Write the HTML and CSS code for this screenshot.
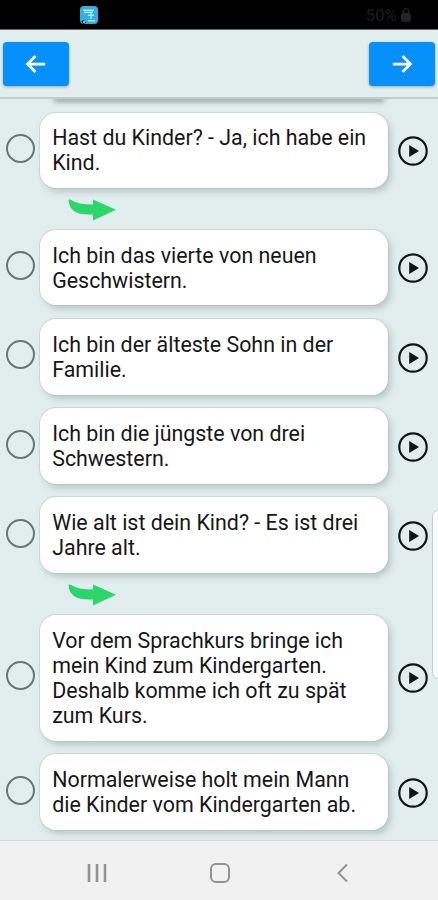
FILE: index.html
```
<!DOCTYPE html>
<html lang="de">
<head>
<meta charset="utf-8">
<title>Sätze</title>
<link rel="stylesheet" href="styles.css">
</head>
<body>
<svg class="defs" aria-hidden="true">
  <symbol id="play" viewBox="0 0 32 32"><circle cx="16" cy="16" r="13.7" fill="none" stroke="#101616" stroke-width="2.2"/><path d="M12.2 10v12L22 16z" fill="#101616"/></symbol>
  <symbol id="swoosh" viewBox="0 0 48 22"><path d="M1 .6Q2 .1 3.2 1Q10 5.6 25 5.6V.6L48 10.8L25 21.4V15.4Q2 17 .6 2Q.5 1 1 .6Z" fill="#2bd66b"/></symbol>
</svg>
<div class="status">
  <svg class="app-icon" viewBox="0 0 20 20"><rect x="1" y="1" width="18" height="18" rx="4" fill="#35aee2"/><path d="M4 5.2h11M5 7.2h9M9 10.3h6M12 7v7M9 15.8h7" stroke="#a9e4f8" stroke-width="1.5" fill="none"/><path d="M2 16l3-1 2 3-3 1z" fill="#20364a"/><circle cx="5" cy="17" r="1" fill="#e8b9b5"/></svg>
  <span class="battery">50%</span>
  <svg class="battery-icon" viewBox="0 0 12 16"><path d="M3.5 6V4a2.5 2.5 0 0 1 5 0v2" fill="none" stroke="#1c1c1c" stroke-width="1.5"/><rect x="1" y="6" width="10" height="9" rx="3" fill="#242424"/></svg>
</div>
<header class="toolbar">
  <button class="nav-btn"><svg viewBox="0 0 24 24"><path d="M22 12H3M11.5 3.2L2.8 12l8.7 8.8"/></svg></button>
  <button class="nav-btn"><svg viewBox="0 0 24 24"><path d="M2 12h19M12.5 3.2L21.2 12l-8.7 8.8"/></svg></button>
</header>
<main class="list">
  <div class="previous"></div>
  <div class="row"><i class="radio"></i><p class="card">Hast du Kinder? - Ja, ich habe ein<br>Kind.</p><svg class="play"><use href="#play"/></svg></div>
  <div class="divider"><svg class="swoosh"><use href="#swoosh"/></svg></div>
  <div class="row"><i class="radio"></i><p class="card">Ich bin das vierte von neuen<br>Geschwistern.</p><svg class="play"><use href="#play"/></svg></div>
  <div class="row"><i class="radio"></i><p class="card">Ich bin der älteste Sohn in der<br>Familie.</p><svg class="play"><use href="#play"/></svg></div>
  <div class="row"><i class="radio"></i><p class="card">Ich bin die jüngste von drei<br>Schwestern.</p><svg class="play"><use href="#play"/></svg></div>
  <div class="row"><i class="radio"></i><p class="card">Wie alt ist dein Kind? - Es ist drei<br>Jahre alt.</p><svg class="play"><use href="#play"/></svg></div>
  <div class="divider"><svg class="swoosh"><use href="#swoosh"/></svg></div>
  <div class="row"><i class="radio"></i><p class="card">Vor dem Sprachkurs bringe ich<br>mein Kind zum Kindergarten.<br>Deshalb komme ich oft zu spät<br>zum Kurs.</p><svg class="play"><use href="#play"/></svg></div>
  <div class="row"><i class="radio"></i><p class="card">Normalerweise holt mein Mann<br>die Kinder vom Kindergarten ab.</p><svg class="play"><use href="#play"/></svg></div>
</main>
<nav class="system">
  <svg viewBox="0 0 24 24"><path d="M4 3v18M12 3v18M20 3v18" stroke-width="2.6"/></svg>
  <svg viewBox="0 0 24 24"><rect x="3" y="3" width="18" height="18" rx="5"/></svg>
  <svg viewBox="0 0 24 24"><path d="M17 3.5L8.5 12l8.5 8.5"/></svg>
</nav>
<div class="edge-handle"></div>
</body>
</html>
```
FILE: styles.css
```
* { box-sizing: border-box; }
body {
  margin: 0;
  width: 438px;
  height: 900px;
  overflow: hidden;
  position: relative;
  display: flex;
  flex-direction: column;
  background: #e2eeee;
  font-family: Roboto, sans-serif;
}
.defs { position: absolute; width: 0; height: 0; }
.status {
  height: 30px;
  flex: none;
  display: flex;
  align-items: center;
  background: #000;
  border-bottom: 1px solid #666c6c;
  padding: 0 26px 0 79px;
}
.app-icon { width: 20px; height: 20px; }
.battery { margin-left: auto; color: #1c1c1c; font-size: 17px; }
.battery-icon { width: 12px; height: 16px; margin-left: 3px; }
.toolbar {
  height: 69px;
  flex: none;
  display: flex;
  justify-content: space-between;
  padding: 12px 3px 0;
  background: #e3eeee;
  border-bottom: 2px solid #c3cbcc;
}
.nav-btn {
  width: 66px;
  height: 44px;
  padding: 0;
  border: 0;
  border-radius: 4px;
  background: #0590fb;
  box-shadow: 0 1px 3px rgba(30, 70, 90, 0.4);
  display: flex;
  align-items: center;
  justify-content: center;
}
.nav-btn svg { width: 22px; height: 22px; fill: none; stroke: #fff; stroke-width: 3; }
.list {
  height: 742px;
  flex: none;
  overflow: hidden;
  display: flex;
  flex-direction: column;
  border-bottom: 1px solid #cfdcdb;
}
.previous {
  height: 13.5px;
  flex: none;
}
.previous::before {
  content: "";
  display: block;
  height: 1px;
  margin: -1px 56px 0;
  box-shadow: 0 1px 5px 2px rgba(105, 122, 124, 0.7);
}
.row { display: flex; align-items: center; padding: 0 9px 0 6px; margin-bottom: 13.8px; flex: none; }
.row:has(+ .divider) { margin-bottom: 0; }
.radio {
  width: 29px;
  height: 29px;
  flex: none;
  border: 2px solid #6b7576;
  border-radius: 50%;
  margin: -4px 5px 0 0;
}
.card {
  width: 347.5px;
  margin: 0;
  padding: 12.9px 0 12.3px 12.2px;
  background: #fff;
  border-radius: 16px;
  box-shadow: 0 0 0 1px rgba(170, 184, 186, 0.35), 3px 4px 6px rgba(120, 140, 142, 0.38);
  color: #171717;
  font-size: 21.4px;
  line-height: 25.1px;
  white-space: nowrap;
  flex: none;
}
.play { width: 32px; height: 32px; margin: 1.5px 0 0 9.5px; flex: none; }
.divider { height: 42.1px; padding: 11px 0 0 67.5px; flex: none; }
.swoosh { display: block; width: 48px; height: 22px; }
.system {
  flex: 1;
  display: flex;
  align-items: center;
  gap: 98.5px;
  padding: 5px 0 0 85px;
  background: #f1f1f1;
}
.system svg { width: 24px; height: 24px; fill: none; stroke: #929292; stroke-width: 2; }
.edge-handle {
  position: absolute;
  right: -10px;
  top: 510px;
  width: 16px;
  height: 169px;
  background: #fafdfd;
  border: 1px solid #c4cfd1;
  border-radius: 6px;
}
```
